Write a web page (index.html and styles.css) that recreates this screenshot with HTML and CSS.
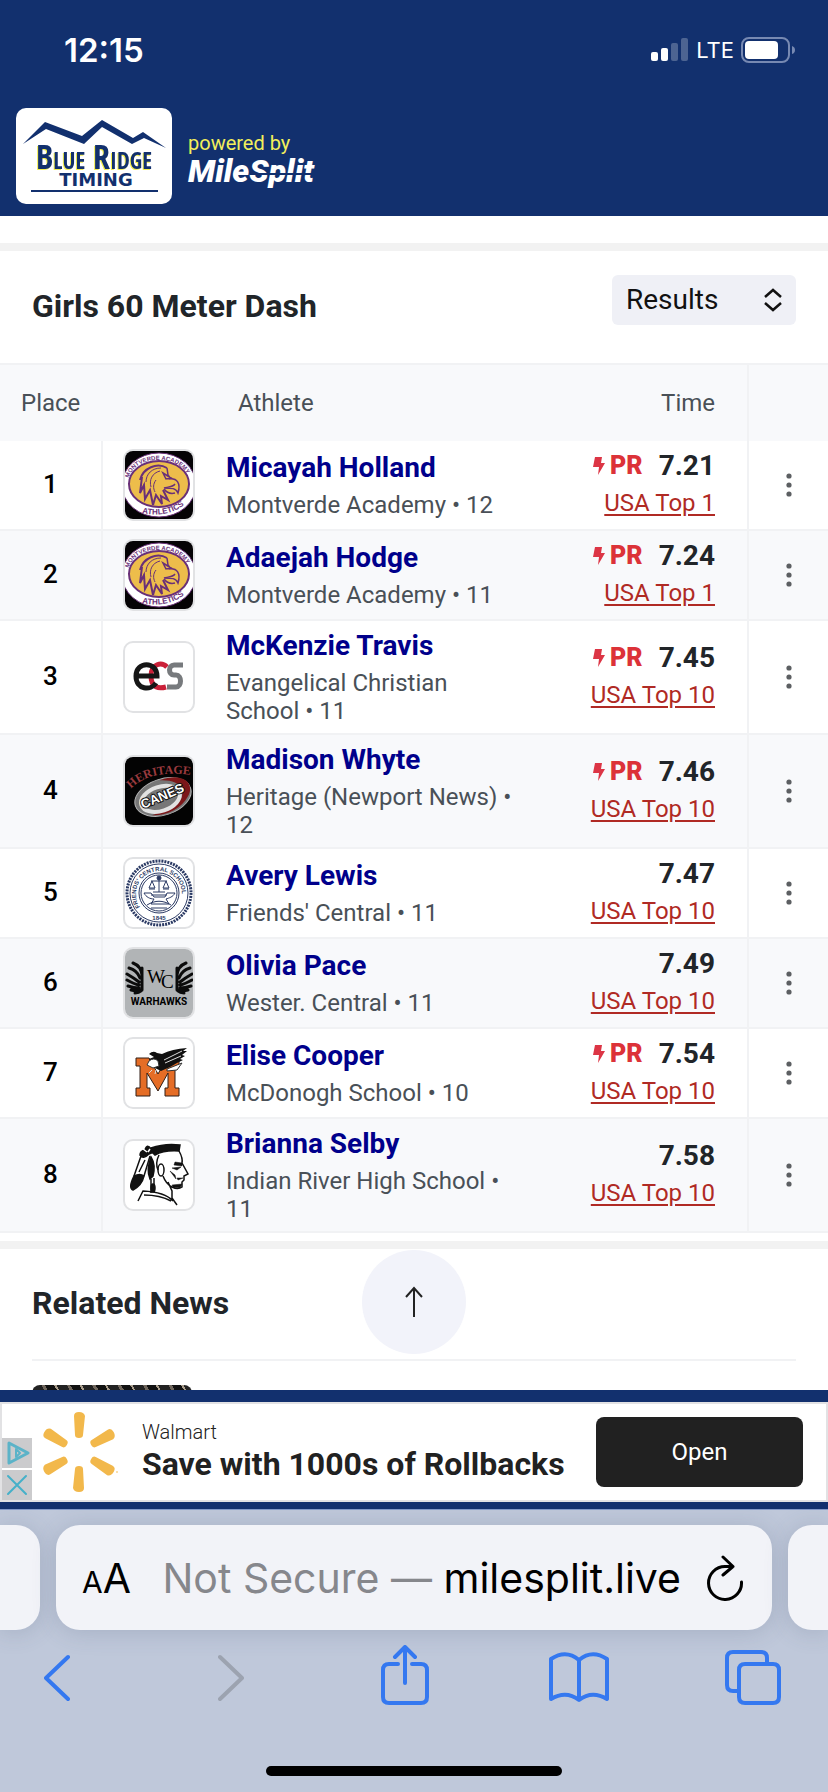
FILE: index.html
```
<!DOCTYPE html>
<html lang="en">
<head>
  <meta charset="utf-8">
  <meta name="viewport" content="width=device-width, initial-scale=1">
  <title>Girls 60 Meter Dash - Results</title>
  <link rel="stylesheet" href="styles.css">
</head>
<body>
  <!-- shared icons -->
  <svg class="sprite" aria-hidden="true">
    <symbol id="dots" viewBox="0 0 8 26">
      <circle cx="4" cy="4" r="2.600"/><circle cx="4" cy="13" r="2.600"/><circle cx="4" cy="22" r="2.600"/>
    </symbol>
    <symbol id="bolt" viewBox="0 0 12 20">
      <path d="M2 1h7L8 7h4L5 19l1-8H0z"/>
    </symbol>
    <symbol id="eagle" viewBox="0 0 68 68">
      <rect width="68" height="68" fill="#050305"/>
      <ellipse cx="34" cy="34" rx="37" ry="32" fill="#fff" stroke="#693078" stroke-width="1"/>
      <ellipse cx="34" cy="33" rx="30" ry="23" fill="#edbd4b" stroke="#693078" stroke-width="2"/>
      <path id="eagle-top" d="M4 27C10 3 56 3 63 26" fill="none"/>
      <path id="eagle-low" d="M17 62Q45 68 64 50" fill="none"/>
      <text class="arc-text"><textPath href="#eagle-top">MONTVERDE ACADEMY</textPath></text>
      <text class="arc-text arc-big"><textPath href="#eagle-low">ATHLETICS</textPath></text>
      <path d="M42 17C32 11 18 17 15 29M17 26l-2 16 4-8 1 14 5-9 3 15 3-10 6 9-1-8 7 4-5-10" fill="none" stroke="#693078" stroke-width="2"/>
      <path d="M42 17l1 7 3 4M38 22l8 5-5 1zM44 28c8-1 12 4 9 14-2-5-6-5-14-5 4-1 9-1 11-4M39 38c3 4 7 5 11 4" fill="none" stroke="#693078" stroke-width="1.500"/>
      <path d="M36 17c-9 0-15 6-15 14M35 20c-8 2-11 9-9 16M31 29c-3 4-3 8-1 12" fill="none" stroke="#693078" stroke-width="1"/>
    </symbol>
  </svg>

  <header class="site-header">
    <div class="status-bar">
      <span class="clock">12:15</span>
      <div class="status-icons">
        <svg width="38" height="24" viewBox="0 0 38 24" fill="#fff">
          <rect x="0" y="14" width="7" height="9" rx="2"/>
          <rect x="10" y="10" width="7" height="13" rx="2"/>
          <rect x="20" y="5" width="7" height="18" rx="2" opacity=".25"/>
          <rect x="30" y="0" width="7" height="23" rx="2" opacity=".25"/>
        </svg>
        <span>LTE</span>
        <svg width="54" height="26" viewBox="0 0 54 26">
          <rect x="1" y="1" width="47" height="24" rx="7" fill="none" stroke="#7789b2" stroke-width="2"/>
          <rect x="4" y="4" width="33" height="18" rx="4" fill="#fff"/>
          <path d="M51 9q3 1 3 4t-3 4z" fill="#7789b2"/>
        </svg>
      </div>
    </div>
    <div class="brand">
      <svg class="brand-logo" viewBox="0 0 156 96" role="img" aria-label="Blue Ridge Timing">
        <path d="M7 36L29 14l37 14L86 12l31 18 10-6 23 16-22-10-12 6-30-17-18 17-38-15z" fill="#12306e"/>
        <text x="20" y="61" class="ridge"><tspan class="cap">B</tspan>LUE</text>
        <text x="77" y="61" class="ridge"><tspan class="cap">R</tspan>IDGE</text>
        <text x="80" y="78" class="timing">TIMING</text>
        <rect x="15" y="82" width="127" height="2" fill="#12306e"/>
      </svg>
      <div class="powered">
        <span class="powered-by">powered by</span>
        <span class="milesplit">MileSplit</span>
      </div>
    </div>
  </header>

  <main class="content">
    <section class="event">
      <div class="event-head">
        <h1>Girls 60 Meter Dash</h1>
        <div class="view-picker">
          <select id="view" aria-label="View">
            <option>Results</option>
            <option>Entries</option>
          </select>
          <svg width="20" height="24" viewBox="0 0 20 24" fill="none" stroke="#111" stroke-width="2.500"><path d="M2 9l8-7 8 7M2 15l8 7 8-7"/></svg>
        </div>
      </div>

      <table class="results">
        <colgroup>
          <col class="col-place"><col class="col-logo"><col><col class="col-time"><col class="col-menu">
        </colgroup>
        <thead>
          <tr><th>Place</th><th></th><th class="th-athlete">Athlete</th><th class="th-time">Time</th><th></th></tr>
        </thead>
        <tbody>
          <tr>
            <td class="place">1</td>
            <td class="logo"><svg class="badge" viewBox="0 0 68 68"><use href="#eagle"/></svg></td>
            <td class="athlete"><a href="#">Micayah Holland</a><p>Montverde Academy • 12</p></td>
            <td class="time"><div class="mark"><svg class="bolt"><use href="#bolt"/></svg><b class="pr">PR</b><span>7.21</span></div><a href="#">USA Top 1</a></td>
            <td class="menu"><button aria-label="More"><svg><use href="#dots"/></svg></button></td>
          </tr>
          <tr>
            <td class="place">2</td>
            <td class="logo"><svg class="badge" viewBox="0 0 68 68"><use href="#eagle"/></svg></td>
            <td class="athlete"><a href="#">Adaejah Hodge</a><p>Montverde Academy • 11</p></td>
            <td class="time"><div class="mark"><svg class="bolt"><use href="#bolt"/></svg><b class="pr">PR</b><span>7.24</span></div><a href="#">USA Top 1</a></td>
            <td class="menu"><button aria-label="More"><svg><use href="#dots"/></svg></button></td>
          </tr>
          <tr>
            <td class="place">3</td>
            <td class="logo">
              <svg class="badge" viewBox="0 0 68 68" fill="none" stroke-width="5">
                <path d="M42 24c-5-5-16-4-16 9 0 12 8 13 15 11" stroke="#ca2038"/>
                <path d="M58 22H49c-6 0-6 10 0 10h2c6 0 6 12 0 12h-9" stroke="#777a7d"/>
                <path d="M11 33h21c0-15-21-15-21 0 0 14 15 15 20 7" stroke="#161616"/>
              </svg>
            </td>
            <td class="athlete"><a href="#">McKenzie Travis</a><p>Evangelical Christian School • 11</p></td>
            <td class="time"><div class="mark"><svg class="bolt"><use href="#bolt"/></svg><b class="pr">PR</b><span>7.45</span></div><a href="#">USA Top 10</a></td>
            <td class="menu"><button aria-label="More"><svg><use href="#dots"/></svg></button></td>
          </tr>
          <tr>
            <td class="place">4</td>
            <td class="logo">
              <svg class="badge" viewBox="0 0 68 68">
                <rect width="68" height="68" fill="#030303"/>
                <g transform="rotate(-18 38 40)">
                  <ellipse cx="38" cy="40" rx="29" ry="18" fill="#777" stroke="#b5b5b5" stroke-width="1"/>
                  <path d="M40 23c25-1 33 14 22 24-10 10-27 12-40 7 25 1 36-5 36-15 0-8-7-13-18-16z" fill="#7c1719"/>
                  <ellipse cx="35" cy="41" rx="20" ry="12" fill="none" stroke="#e2e2e2" stroke-width="4"/>
                </g>
                <path id="heritage-arc" d="M6 32Q24 12 67 18" fill="none"/>
                <text class="heritage"><textPath href="#heritage-arc">HERITAGE</textPath></text>
                <text x="18" y="52" class="canes" transform="rotate(-23 18 52)">CANES</text>
              </svg>
            </td>
            <td class="athlete"><a href="#">Madison Whyte</a><p>Heritage (Newport News) • 12</p></td>
            <td class="time"><div class="mark"><svg class="bolt"><use href="#bolt"/></svg><b class="pr">PR</b><span>7.46</span></div><a href="#">USA Top 10</a></td>
            <td class="menu"><button aria-label="More"><svg><use href="#dots"/></svg></button></td>
          </tr>
          <tr>
            <td class="place">5</td>
            <td class="logo">
              <svg class="badge" viewBox="0 0 68 68" fill="none" stroke="#2b3a64">
                <circle cx="34" cy="34" r="32" stroke-width="3" stroke-dasharray="2 1"/>
                <circle cx="34" cy="34" r="29"/>
                <circle cx="34" cy="34" r="20"/><circle cx="34" cy="34" r="18"/>
                <path id="friends-arc" d="M15 48A23 23 0 1 1 53 48" stroke="none"/>
                <text class="seal"><textPath href="#friends-arc">FRIENDS' CENTRAL SCHOOL</textPath></text>
                <text x="34" y="61" class="seal" text-anchor="middle">1845</text>
                <path d="M34 18v15M26 22h16M27 22l-3 7h6zM41 22l-3 7h6zM24 30h6M38 30h6M19 34h7l3 4h11l2-4h8c-2 4-6 5-9 6l3 5H26l3-5c-4 0-8-2-10-6zM26 36h16M28 33h12M22 46c8-5 16-5 24 0M26 49h16"/>
                <circle cx="34" cy="19" r="2" fill="#2b3a64"/>
              </svg>
            </td>
            <td class="athlete"><a href="#">Avery Lewis</a><p>Friends' Central • 11</p></td>
            <td class="time"><div class="mark"><span>7.47</span></div><a href="#">USA Top 10</a></td>
            <td class="menu"><button aria-label="More"><svg><use href="#dots"/></svg></button></td>
          </tr>
          <tr>
            <td class="place">6</td>
            <td class="logo">
              <svg class="badge" viewBox="0 0 68 68">
                <rect width="68" height="68" fill="#b1b4b6"/>
                <g id="wing" fill="none" stroke="#0b0b0b" stroke-width="3" stroke-linecap="round">
                  <path d="M8 14q8 3 9 12M4 19q8 2 11 10M2 25q7 4 12 8M2 31q7 4 12 5M3 37q6 2 11 2M6 41q5 1 9 0M10 44q4 0 6-2M17 19v22"/>
                </g>
                <use href="#wing" transform="matrix(-1 0 0 1 69 0)"/>
                <text x="22" y="34" class="wc">W<tspan dx="-4" dy="5">C</tspan></text>
                <text x="34" y="56" class="warhawks" text-anchor="middle">WARHAWKS</text>
              </svg>
            </td>
            <td class="athlete"><a href="#">Olivia Pace</a><p>Wester. Central • 11</p></td>
            <td class="time"><div class="mark"><span>7.49</span></div><a href="#">USA Top 10</a></td>
            <td class="menu"><button aria-label="More"><svg><use href="#dots"/></svg></button></td>
          </tr>
          <tr>
            <td class="place">7</td>
            <td class="logo">
              <svg class="badge" viewBox="0 0 68 68">
                <path d="M11 19h13l9 16 9-16h12v8h-4v22h4v8H40v-8h3V34L33 52 22 34v15h3v8H11v-8h4V27h-4z" fill="#e56d26" stroke="#301e16" stroke-width="1"/>
                <path d="M24 15q4-4 8-1l5 1q10-5 25-6l-4 3h4l-5 4 3 1-5 3 3 1-6 3-7 4-9 4-8-4-4-8 5-2z" fill="#111"/>
                <path d="M24 22q5-4 9 0l1 5-6 2-6-3zM42 30l15-6-5 7-10 1z" fill="#fff" stroke="#333"/>
                <path d="M39 21l18-9M40 24l16-7M27 31l-3 3M31 31l-1 4" stroke="#ddd"/>
              </svg>
            </td>
            <td class="athlete"><a href="#">Elise Cooper</a><p>McDonogh School • 10</p></td>
            <td class="time"><div class="mark"><svg class="bolt"><use href="#bolt"/></svg><b class="pr">PR</b><span>7.54</span></div><a href="#">USA Top 10</a></td>
            <td class="menu"><button aria-label="More"><svg><use href="#dots"/></svg></button></td>
          </tr>
          <tr>
            <td class="place">8</td>
            <td class="logo">
              <svg class="badge" viewBox="0 0 68 68" fill="none" stroke="#111" stroke-width="1.500">
                <path d="M26 7q14-5 29-3l-1 6q-15-1-24 4l-5-5z" fill="#111"/>
                <path d="M54 10q4 7 3 12l6 11-4 2v4l-2 2v5q-4 3-10 0-6-3-9-11M34 14q-4 8-1 15M43 41l4 9v7l5 7M13 60l5-10q22 1 30 10M19 54q16 0 27 6"/>
                <path d="M50 21l7 1v3l-8-1zM47 27l9-1-4 3zM45 30l5 4 1 4zM52 37h6l-5 2zM47 44l10-1-2 4-7-1z" fill="#111" stroke-width=".500"/>
                <ellipse cx="36" cy="29" rx="3" ry="6"/>
                <path d="M20 9q2-7 6-1 7-3 3 3l-5 2q-6 6-9 1 0-4 5-5zM9 35q6-3 10 0-2 9-11 14-5-2 1-14zM26 16q5 8 2 19l-3 3q-4-9 1-22z" fill="#111"/>
                <path d="M16 15L9 35M25 15l-6 20M20 19l-6 12"/>
                <path d="M18 8l4 3M25 8l-2 3" stroke="#fff"/>
                <path d="M26 38v14M29 37v14"/><ellipse cx="28" cy="47" rx="2" ry="4" fill="#111"/>
              </svg>
            </td>
            <td class="athlete"><a href="#">Brianna Selby</a><p>Indian River High School • 11</p></td>
            <td class="time"><div class="mark"><span>7.58</span></div><a href="#">USA Top 10</a></td>
            <td class="menu"><button aria-label="More"><svg><use href="#dots"/></svg></button></td>
          </tr>
        </tbody>
      </table>
    </section>

    <section class="news">
      <h2>Related News</h2>
      <div class="news-thumb"></div>
    </section>
  </main>

  <div class="ad-slot">
    <button class="to-top" aria-label="Back to top">
      <svg width="18" height="32" viewBox="0 0 18 32" fill="none" stroke="#222" stroke-width="2"><path d="M9 31V3M1 11l8-9 8 9"/></svg>
    </button>
    <div class="ad">
      <div class="ad-tools">
        <button aria-label="AdChoices"><svg width="30" height="30" viewBox="0 0 30 30" fill="none" stroke="#5bb3c8" stroke-width="3" stroke-linejoin="round"><path d="M7 5l19 10L7 25z"/><path d="M14 11v8l4-4z" stroke-width="2"/></svg></button>
        <button aria-label="Close ad"><svg width="30" height="30" viewBox="0 0 30 30" stroke="#45b0c9" stroke-width="2" stroke-linecap="round"><path d="M6 6l18 18M24 6L6 24"/></svg></button>
      </div>
      <svg class="spark" viewBox="0 0 76 82" fill="#f2b84b">
        <path id="ray" d="M31 5q0-4 5-4t6 4l-2 19q0 3-4 3t-4-3z"/>
        <use href="#ray" transform="rotate(60 36 41)"/>
        <use href="#ray" transform="rotate(120 36 41)"/>
        <use href="#ray" transform="rotate(180 36 41)"/>
        <use href="#ray" transform="rotate(240 36 41)"/>
        <use href="#ray" transform="rotate(300 36 41)"/>
        <circle cx="74" cy="61" r="1" opacity=".6"/>
      </svg>
      <div class="ad-text">
        <span class="ad-brand">Walmart</span>
        <span class="ad-title">Save with 1000s of Rollbacks</span>
      </div>
      <button class="ad-open">Open</button>
    </div>
  </div>

  <footer class="browser">
    <div class="tabs">
      <div class="tab-edge tab-left"></div>
      <div class="address">
        <button class="reader" aria-label="Page settings"><small>A</small>A</button>
        <p><span>Not Secure —</span> milesplit.live</p>
        <button class="reload" aria-label="Reload">
          <svg width="38" height="46" viewBox="0 0 38 46" fill="none" stroke="#000" stroke-width="3" stroke-linecap="round" stroke-linejoin="round"><path d="M27 11.500H19A16.500 16.500 0 1 0 35.500 27M17 2l10 9.500L17 20"/></svg>
        </button>
      </div>
      <div class="tab-edge tab-right"></div>
    </div>
    <nav class="toolbar">
      <button aria-label="Back"><svg width="26" height="60" viewBox="0 0 26 60"><path d="M24 12L2 33l22 21"/></svg></button>
      <button aria-label="Forward" disabled><svg width="26" height="60" viewBox="0 0 26 60"><path d="M2 12l22 21L2 54"/></svg></button>
      <button aria-label="Share"><svg width="48" height="60" viewBox="0 0 48 60"><path d="M17 19H8q-6 0-6 6v27q0 6 6 6h32q6 0 6-6V25q0-6-6-6h-9M24 38V3M14 12L24 2l10 10"/></svg></button>
      <button aria-label="Bookmarks"><svg width="60" height="60" viewBox="0 0 60 60"><path d="M30 15Q17 4 2 14v40q15-9 28 1 13-10 28-1V14Q43 4 30 15zv39"/></svg></button>
      <button aria-label="Tabs"><svg width="56" height="60" viewBox="0 0 56 60"><path d="M14 46H8q-6 0-6-6V13q0-6 6-6h28q6 0 6 6v6M20 19h28q6 0 6 6v27q0 6-6 6H20q-6 0-6-6V25q0-6 6-6z"/></svg></button>
    </nav>
    <div class="home-bar"></div>
  </footer>
</body>
</html>
```
FILE: styles.css
```
* {
  box-sizing: border-box;
}

body {
  margin: 0;
  height: 100vh;
  display: flex;
  flex-direction: column;
  background: #fff;
  color: #212529;
  font-family: Roboto, sans-serif;
  font-size: 24px;
}

h1, h2, p {
  margin: 0;
}

button {
  padding: 0;
  border: none;
  background: none;
  color: inherit;
  font: inherit;
  cursor: pointer;
}

svg {
  display: block;
}

.sprite {
  position: absolute;
  width: 0;
  height: 0;
}

/* header */
.site-header {
  flex: none;
  padding-bottom: 12px;
  background: #12306e;
  color: #fff;
}

.status-bar {
  display: flex;
  justify-content: space-between;
  align-items: center;
  height: 108px;
  padding: 0 33px 8px 64px;
}

.clock {
  font: 600 33px Inter, sans-serif;
}

.status-icons {
  display: flex;
  align-items: center;
  gap: 7px;
  font: 400 22px Inter, sans-serif;
}

.brand {
  display: flex;
  align-items: center;
  gap: 16px;
  padding: 0 16px;
}

.brand-logo {
  width: 156px;
  height: 96px;
  border-radius: 10px;
  background: #fff;
}

.ridge {
  fill: #12306e;
  filter: drop-shadow(-1px 1px 0 #f3ee4e);
  font: bold 23px "Liberation Sans Narrow", "Open Sans Condensed", Roboto, sans-serif;
}

.ridge .cap {
  font-size: 34px;
}

.timing {
  font: bold 18px "DejaVu Sans", sans-serif;
  text-anchor: middle;
  fill: #12306e;
}

.powered {
  display: flex;
  flex-direction: column;
  padding-top: 6px;
}

.powered-by {
  color: #f2ef5b;
  font-size: 20px;
  line-height: 24px;
}

.milesplit {
  position: relative;
  font-size: 32px;
  font-style: italic;
  font-weight: 900;
  line-height: 32px;
}

/* slit through the second half of the wordmark */
.milesplit::after {
  content: "";
  position: absolute;
  right: 0;
  bottom: 12px;
  width: 64px;
  height: 2px;
  background: #12306e;
}

/* event */
.content {
  flex: 1;
  min-height: 0;
  overflow: hidden;
  padding-top: 27px;
}

.event,
.news {
  border-top: 8px solid #f2f2f2;
}

.event {
  padding-bottom: 8px;
}

.event-head {
  display: flex;
  justify-content: space-between;
  align-items: flex-start;
  height: 112px;
  padding: 24px 32px 0;
}

h1, h2 {
  font-size: 32px;
  font-weight: 700;
  line-height: 40px;
}

h1 {
  padding-top: 11px;
}

.view-picker {
  position: relative;
}

.view-picker select {
  width: 184px;
  height: 50px;
  padding: 0 14px 2px;
  border: none;
  border-radius: 6px;
  background: #eff0f6;
  color: #111;
  font: 28px Roboto, sans-serif;
  appearance: none;
}

.view-picker svg {
  position: absolute;
  top: 13px;
  right: 13px;
  pointer-events: none;
}

.results {
  width: 100%;
  border-top: 2px solid #f1f2f4;
  border-spacing: 0;
  table-layout: fixed;
}

.col-place,
.col-logo {
  width: 103px;
}

.col-time {
  width: 212px;
}

.col-menu {
  width: 79px;
}

th {
  height: 76px;
  padding: 0 0 0 21px;
  background: #f8f9fb;
  color: #495057;
  font-weight: 400;
  text-align: left;
}

th.th-athlete {
  padding-left: 32px;
}

th.th-time {
  padding-right: 32px;
  border-right: 2px solid #f1f2f4;
  text-align: right;
}

td {
  height: 90px;
  padding: 8px 0;
  border-bottom: 2px solid #f1f2f4;
}

tbody tr:nth-child(even) {
  background: #f8f9fb;
}

.place {
  padding-bottom: 10px;
  border-right: 2px solid #f1f2f4;
  color: #000;
  font-size: 26px;
  font-weight: 500;
  text-align: center;
}

.logo {
  padding: 0 0 0 20px;
}

.badge {
  width: 72px;
  height: 72px;
  border: 2px solid #e1e2e4;
  border-radius: 10px;
  background: #fff;
}

.athlete {
  padding: 8px 20px;
  color: #495057;
}

.athlete a {
  display: block;
  margin-bottom: 6px;
  color: #00008b;
  font-size: 28px;
  font-weight: 700;
  line-height: 34px;
  text-decoration: none;
}

.athlete p {
  line-height: 28px;
}

.time {
  padding: 0 32px 0 0;
  border-right: 2px solid #f1f2f4;
  text-align: right;
}

.mark {
  display: flex;
  justify-content: flex-end;
  align-items: center;
  font-size: 28px;
  font-weight: 700;
  line-height: 36px;
}

.time a {
  color: #b02a24;
  line-height: 38px;
  text-underline-offset: 3px;
}

.bolt {
  width: 12px;
  height: 20px;
  margin-right: 5px;
  fill: #dc3545;
}

.pr {
  margin-right: 16px;
  color: #dc3238;
  font-size: 25px;
  font-weight: 900;
}

.menu button {
  display: block;
  margin: 0 auto;
}

.menu svg {
  width: 8px;
  height: 26px;
  fill: #5c5f62;
}

/* school logos */
.arc-text {
  fill: #693078;
  font: bold 6px "Liberation Sans", sans-serif;
}

.arc-big {
  font-size: 8px;
}

.heritage {
  fill: #9a3a3e;
  font: bold 12px "Liberation Serif", serif;
}

.canes {
  fill: #fff;
  stroke: #111;
  stroke-width: 2px;
  paint-order: stroke;
  font: bold 13px "Liberation Sans", sans-serif;
}

.seal {
  fill: #2b3a64;
  stroke: none;
  font: bold 6px "Liberation Sans", sans-serif;
}

.wc {
  font: 19px "Liberation Serif", serif;
}

.warhawks {
  font: bold 10px Roboto, sans-serif;
}

/* news */
.news {
  padding: 0 32px;
}

.news h2 {
  height: 112px;
  padding-top: 34px;
  border-bottom: 2px solid #f1f2f4;
}

.news-thumb {
  width: 160px;
  height: 90px;
  margin-top: 24px;
  border-radius: 8px;
  background: repeating-linear-gradient(60deg, #222 0 9px, #6e655b 9px 12px, #111 12px 20px, #a89c8a 20px 22px);
}

.to-top {
  position: absolute;
  bottom: 100%;
  left: 50%;
  display: grid;
  place-items: center;
  width: 104px;
  height: 104px;
  margin: 0 0 36px -52px;
  border-radius: 50%;
  background: #f2f3fa;
}

/* ad */
.ad-slot {
  position: relative;
  flex: none;
  padding: 12px 0 7px;
  background: #12306e;
}

.ad {
  display: flex;
  align-items: center;
  height: 100px;
  padding-right: 23px;
  border: 2px solid #e2e2e4;
  background: #fff;
  color: #212121;
}

.ad-tools {
  display: flex;
  flex-direction: column;
  align-self: flex-end;
  gap: 2px;
}

.ad-tools button {
  background: #cbcbcd;
}

.spark {
  width: 76px;
  height: 82px;
  margin: 0 23px 0 11px;
}

.ad-text {
  display: flex;
  flex: 1;
  flex-direction: column;
}

.ad-brand {
  font-size: 20px;
  font-weight: 300;
  line-height: 24px;
}

.ad-title {
  font-size: 32px;
  font-weight: 700;
  line-height: 40px;
}

.ad-open {
  width: 207px;
  height: 70px;
  border-radius: 8px;
  background: #212121;
  color: #fff;
}

/* browser chrome */
.browser {
  flex: none;
  padding: 15px 0 16px;
  border-top: 1px solid #8399c9;
  background: #bfc8da;
}

.tabs {
  display: flex;
  gap: 16px;
}

.tab-edge,
.address {
  height: 105px;
  background: #f2f3f8;
  box-shadow: 0 2px 24px rgba(60, 75, 105, .2);
}

.tab-edge {
  width: 40px;
}

.tab-left {
  border-radius: 0 24px 24px 0;
}

.tab-right {
  border-radius: 24px 0 0 24px;
}

.address {
  display: flex;
  flex: 1;
  align-items: center;
  padding: 0 28px 0 26px;
  border-radius: 24px;
  color: #000;
  font-family: Inter, sans-serif;
  font-size: 41px;
  white-space: nowrap;
}

.address p {
  margin: 0 25px 0 auto;
}

.address p span {
  color: #86878c;
}

.reader small {
  font-size: 30px;
}

.toolbar {
  display: flex;
  justify-content: space-between;
  padding: 15px 45px 0 27px;
}

.toolbar button {
  display: grid;
  place-items: center;
  width: 60px;
}

.toolbar svg {
  fill: none;
  stroke: #3478f0;
  stroke-width: 4;
  stroke-linecap: round;
  stroke-linejoin: round;
}

.toolbar button:disabled svg {
  stroke: #9ca3b0;
}

.home-bar {
  width: 296px;
  height: 10px;
  margin: 61px auto 0;
  border-radius: 5px;
  background: #000;
}
```
